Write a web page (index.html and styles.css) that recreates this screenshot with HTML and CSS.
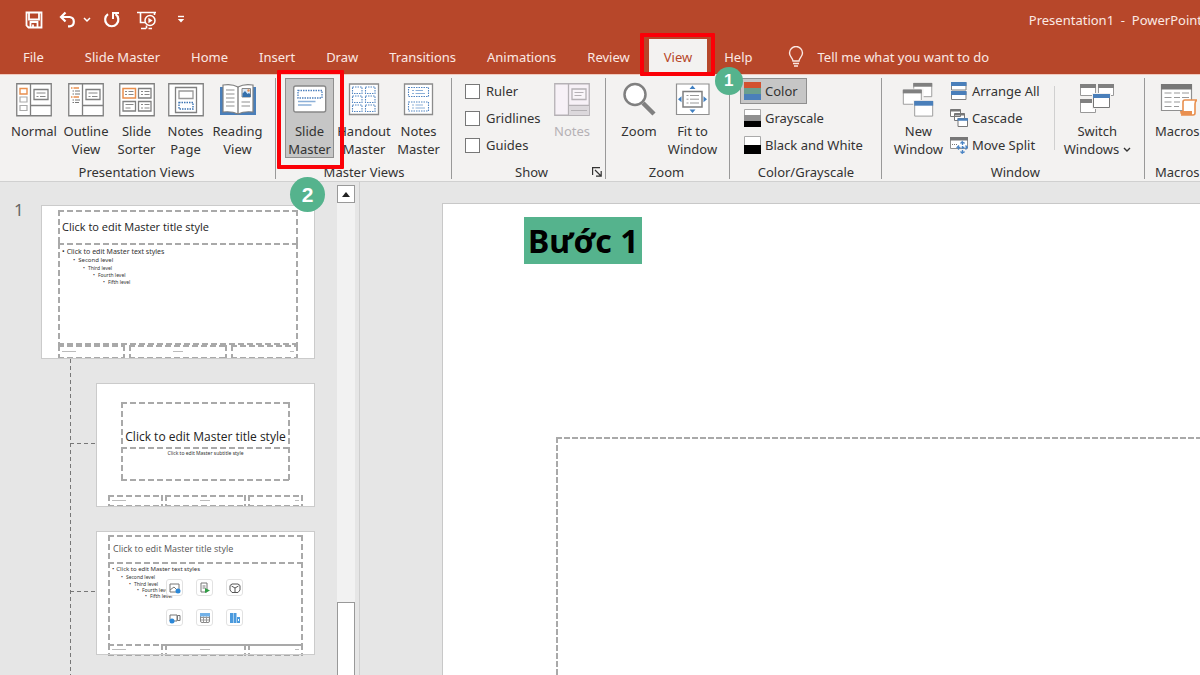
FILE: index.html
```html
<!DOCTYPE html>
<html lang="en">
<head>
<meta charset="utf-8">
<title>Presentation1 - PowerPoint</title>
<link rel="stylesheet" href="styles.css">
</head>
<body>
<header class="titlebar">
  <div class="quick">
    <button class="qa qa-save" aria-label="Save"><svg width="18" height="18" viewBox="0 0 18 18"><path d="M1.500 1.500h15v15H3.500l-2-2zM4 2v6.500h10V2M5.500 16v-5h7v5M8 13.500v3" fill="none" stroke="#fff" stroke-width="1.800"/></svg></button>
    <button class="qa qa-undo" aria-label="Undo"><svg width="18" height="18" viewBox="0 0 18 18"><path d="M6.500 1.500L2 6l4.500 4.500M2.500 6h8.300a4.700 4.700 0 0 1 0 9.300H9" fill="none" stroke="#fff" stroke-width="2.200"/></svg></button>
    <button class="qa qa-menu" aria-label="Undo history"><svg width="8" height="6" viewBox="0 0 8 6"><path d="M1 1l3 3 3-3" fill="none" stroke="#fff" stroke-width="1.500"/></svg></button>
    <button class="qa qa-redo" aria-label="Redo"><svg width="18" height="18" viewBox="0 0 18 18"><path d="M5 3.200A6.600 6.600 0 1 0 12.500 3.200" fill="none" stroke="#fff" stroke-width="2.200"/><path d="M10 8V2h6" fill="none" stroke="#fff" stroke-width="2"/></svg></button>
    <button class="qa qa-show" aria-label="Start from beginning"><svg width="20" height="20" viewBox="0 0 20 20"><path d="M0 2.500h19M3.500 3v9.500h5M17.500 3v2M4 18.500h5M11.500 18.500H15M9.500 15.500v3" fill="none" stroke="#fff" stroke-width="1.600"/><circle cx="13" cy="10.500" r="5" fill="none" stroke="#fff" stroke-width="1.500"/><path d="M11.400 7.800v5.400l4.200-2.700z" fill="#fff"/></svg></button>
    <button class="qa qa-more" aria-label="Customize Quick Access Toolbar"><svg width="8" height="9" viewBox="0 0 8 9"><path d="M1 1.500h6" stroke="#fff" stroke-width="1.400"/><path d="M.8 4h6.400L4 7.500z" fill="#fff"/></svg></button>
    <span class="doc">Presentation1&nbsp; -&nbsp; PowerPoint</span>
  </div>
  <nav class="tabs">
    <button class="tab tab-file">File</button>
    <button class="tab">Slide Master</button>
    <button class="tab">Home</button>
    <button class="tab">Insert</button>
    <button class="tab">Draw</button>
    <button class="tab">Transitions</button>
    <button class="tab">Animations</button>
    <button class="tab">Review</button>
    <div class="marked marked-tab"><button class="tab tab-on">View</button><span class="frame frame-tab"></span><span class="step step-1">1</span></div>
    <button class="tab">Help</button>
    <button class="tell"><svg width="16" height="22" viewBox="0 0 16 22"><path d="M5 15c0-3-3.500-4-3.500-8a6.300 6.300 0 0 1 13 0c0 4-3.500 5-3.500 8zM5 17.500h6M6 20h4" fill="none" stroke="#fbe9e4" stroke-width="1.400"/></svg>Tell me what you want to do</button>
  </nav>
</header>

<section class="ribbon" aria-label="View">
  <div class="group g-views">
    <div class="tools">
      <button class="big w52"><svg width="36" height="36" viewBox="0 0 36 36"><path d="M.75 1.750h34.500v32H.75z" fill="#fff" stroke="#808080" stroke-width="1.300"/><path d="M14.500 2v32M15 23.500h20" stroke="#808080" stroke-width="1.300"/><path d="M18 7.500h14v10H18z" fill="#fff" stroke="#808080" stroke-width="1.300"/><path d="M20.500 11h9M20.500 14.500h2M24 14.500h5.500" stroke="#888"/><path d="M4 6.500h7V12H4z" fill="#fff" stroke="#e98f4e" stroke-width="1.400"/><path d="M4 15h7v5H4zM4 23.500h7v5H4z" fill="#fff" stroke="#aaa" stroke-width="1.200"/></svg><span>Normal</span></button>
      <button class="big w52"><svg width="36" height="36" viewBox="0 0 36 36"><path d="M.75 1.750h34.500v32H.75z" fill="#fff" stroke="#808080" stroke-width="1.300"/><path d="M14.500 2v32M15 23.500h20" stroke="#808080" stroke-width="1.300"/><path d="M18 7.500h14v10H18z" fill="#fff" stroke="#808080" stroke-width="1.300"/><path d="M20.500 11h9M20.500 14.500h2M24 14.500h5.500" stroke="#888"/><path d="M3 6h1.500M5.500 6H11M3 15h1.500M5.500 15H11" stroke="#e98f4e" stroke-width="1.400"/><path d="M4.500 9H6M7 9h5M4.500 12H6M7 12h5M4.500 18H6M7 18h5M4.500 20.500H6M7 20.500h4" stroke="#777" stroke-width="1"/></svg><span>Outline<br>View</span></button>
      <button class="big w48"><svg width="36" height="36" viewBox="0 0 36 36"><path d="M.75 1.750h34.500v32H.75z" fill="#fff" stroke="#808080" stroke-width="1.300"/><path d="M4 6.500h12.500v9.500H4z" fill="none" stroke="#e98f4e" stroke-width="1.500"/><path d="M19.500 6.500H32v9.500H19.500zM4 19.500h12.500V29H4zM19.500 19.500H32V29H19.500z" fill="none" stroke="#808080" stroke-width="1.300"/><path d="M6 9.500h2M9.500 9.500h5M6 12.500h2M9.500 12.500h5M22 9.500h2M25.500 9.500h5M22 12.500h2M25.500 12.500h5M6.500 22.500h8M6.500 26h5M22 22.500h2M25.500 22.500h5M22 26h2M25.500 26h5" stroke="#888"/></svg><span>Slide<br>Sorter</span></button>
      <button class="big w48"><svg width="36" height="36" viewBox="0 0 36 36"><path d="M.75 1.750h34.500v32H.75z" fill="#fff" stroke="#808080" stroke-width="1.300"/><path d="M7.500 5.500h21v25h-21z" fill="#fff" stroke="#808080" stroke-width="1.300"/><path d="M11 9h14v7.500H11z" fill="#fff" stroke="#999" stroke-width="1.300"/><path d="M11 20.500h14V27H11z" fill="#fff" stroke="#3f76b4" stroke-width="1.400" stroke-dasharray="1.500 1"/></svg><span>Notes<br>Page</span></button>
      <button class="big w56"><svg width="38" height="36" viewBox="0 0 38 36"><path d="M1 5h36v28H1z" fill="#4a7fba"/><path d="M4 3q9-1.500 15 2 6-3.500 15-2v27q-9-1-15 2-6-3-15-2z" fill="#fff" stroke="#808080" stroke-width="1.200"/><path d="M19 5v27" stroke="#777" stroke-width="1.300"/><path d="M7 8h8.500M7 12h8.500M7 16h8.500M7 20h8.500M7 24h8.500M22.500 20H31M22.500 24H31" stroke="#909090" stroke-width="1.200"/><path d="M23 6.500h8.500V15H23z" fill="#d8e5f3" stroke="#888"/><path d="M23.500 15v-3.500l2.500-2.500 2.500 3 1.500-1 1.500 1.500V15z" fill="#346fab"/><circle cx="29.500" cy="8.500" r="1.200" fill="#e98f4e"/></svg><span>Reading<br>View</span></button>
    </div>
    <h2 class="caption">Presentation Views</h2>
  </div>
  <div class="group g-masters">
    <div class="tools">
      <div class="marked"><button class="big w48 pressed"><svg width="36" height="36" viewBox="0 0 36 36"><rect x="1.700" y="4" width="32" height="26" rx="2" fill="#fff" stroke="#888" stroke-width="1.400"/><path d="M6 8.500h24V16H6z" fill="none" stroke="#4f81bd" stroke-width="1.300" stroke-dasharray="1.500 1"/><path d="M6 19.500h17.500M6 23h13.500" stroke="#8cb0d8" stroke-width="1.300"/></svg><span>Slide<br>Master</span></button><span class="frame frame-button"></span><span class="step step-2">2</span></div>
      <button class="big w60"><svg width="36" height="36" viewBox="0 0 36 36"><path d="M3.500 2h29v30.500h-29z" fill="#fff" stroke="#8c8c8c" stroke-width="1.300"/><g fill="none" stroke="#5286c2" stroke-width="1.100" stroke-dasharray="1.500 1"><path d="M6.500 5h9.500v6.500H6.500zM19.500 5H29v6.500h-9.500zM6.500 14H16v6.500H6.500zM19.500 14H29v6.500h-9.500zM6.500 23H16v6.500H6.500zM19.500 23H29v6.500h-9.500z"/></g></svg><span>Handout<br>Master</span></button>
      <button class="big w48"><svg width="36" height="36" viewBox="0 0 36 36"><path d="M3.500 2h28v30.500h-28z" fill="#fff" stroke="#8c8c8c" stroke-width="1.300"/><g fill="none" stroke="#5286c2" stroke-width="1.100" stroke-dasharray="1.500 1"><path d="M7.500 5.500h20v9h-20zM7.500 20h20v9h-20z"/></g><path d="M11 8.500h2M14.500 8.500H22M11 11.500h2M14.500 11.500H24M11 23h2M14.500 23H22M11 26h2M14.500 26H24" stroke="#8cb0d8"/></svg><span>Notes<br>Master</span></button>
    </div>
    <h2 class="caption">Master Views</h2>
  </div>
  <div class="group g-show">
    <div class="tools">
      <div class="stack checks">
        <label><input type="checkbox">Ruler</label>
        <label><input type="checkbox">Gridlines</label>
        <label><input type="checkbox">Guides</label>
      </div>
      <button class="big w52 off" disabled><svg width="36" height="36" viewBox="0 0 36 36"><path d="M.75 1.750h34.500v31.500H.75z" fill="#f7f1f7" stroke="#b5b1b5" stroke-width="1.300"/><path d="M14.500 2v31M15 23.500h20" stroke="#b5b1b5" stroke-width="1.300"/><path d="M15 24h20v9H15z" fill="#dcd8dc"/><path d="M18 7h14v10.500H18z" fill="#f9f5f9" stroke="#b5b1b5" stroke-width="1.300"/><path d="M20.500 10.500h9M20.500 13.500h7M17 28.500h16" stroke="#b5b1b5"/></svg><span>Notes</span></button>
    </div>
    <h2 class="caption">Show</h2>
    <button class="launcher" aria-label="Grid Settings"><svg width="10" height="10" viewBox="0 0 10 10"><path d="M.6 8V.6H8M3 3l5.500 5.500M9.200 4v5.200H4" fill="none" stroke="#333" stroke-width="1.200"/></svg></button>
  </div>
  <div class="group g-zoom">
    <div class="tools">
      <button class="big w52"><svg width="36" height="36" viewBox="0 0 36 36"><path d="M22 21l11 11" stroke="#808080" stroke-width="4.500"/><circle cx="14" cy="12.500" r="10.500" fill="#fff" stroke="#808080" stroke-width="2.500"/></svg><span>Zoom</span></button>
      <button class="big w56"><svg width="36" height="36" viewBox="0 0 36 36"><path d="M1.500 2h32.500v30.500H1.500z" fill="#fff" stroke="#909090" stroke-width="1.200"/><path d="M8 9.500h19v15.500H8z" fill="#fff" stroke="#808080" stroke-width="1.500"/><path d="M11.500 13.500h2M15 13.500h9M11.500 17.200h2M15 17.200h9M11.500 21h2M15 21h9" stroke="#999"/><path d="M14.500 7l3-3.500 3 3.500zM14.500 27.500l3 3.500 3-3.500zM6.500 14.200L3 17.200l3.500 3zM28.500 14.200l3.500 3-3.500 3z" fill="#3f7fc1"/></svg><span>Fit to<br>Window</span></button>
    </div>
    <h2 class="caption">Zoom</h2>
  </div>
  <div class="group g-color">
    <div class="tools">
      <div class="stack">
        <button class="small pressed"><svg width="17" height="18" viewBox="0 0 17 18"><path d="M0 0h17v6H0z" fill="#d35230"/><path d="M0 6h17v6H0z" fill="#6a9f8e"/><path d="M0 12h17v6H0z" fill="#4a7fba"/></svg>Color</button>
        <button class="small"><svg width="17" height="18" viewBox="0 0 17 18"><path d="M.5.5h16v17H.5z" fill="#fff" stroke="#aaa"/><path d="M0 6h17v6H0z" fill="#909090"/><path d="M0 12h17v6H0z" fill="#000"/></svg>Grayscale</button>
        <button class="small"><svg width="17" height="18" viewBox="0 0 17 18"><path d="M.5.5h16v17H.5z" fill="#fff" stroke="#aaa"/><path d="M0 9h17v9H0z" fill="#000"/></svg>Black and White</button>
      </div>
    </div>
    <h2 class="caption">Color/Grayscale</h2>
  </div>
  <div class="group g-window">
    <div class="tools">
      <button class="big w56"><svg width="36" height="38" viewBox="0 0 36 38"><g fill="#fff" stroke="#999"><path d="M13.500 1.500h19v14h-19z"/></g><path d="M13 1h20v4H13z" fill="#808080"/><path d="M1 7h23v18H1z" fill="#f3f2f1"/><path d="M2.500 8.500h19v15h-19z" fill="#fff" stroke="#999"/><path d="M2 8h20v4H2z" fill="#808080"/><path d="M13 19h22v18H13z" fill="#f3f2f1"/><path d="M14.500 20.500h19v15.500h-19z" fill="#fff" stroke="#999"/><path d="M14 20h20v5H14z" fill="#4a7fba"/></svg><span>New<br>Window</span></button>
      <div class="stack">
        <button class="small"><svg width="18" height="18" viewBox="0 0 18 18"><path d="M1.500.5h14.500v7.500H1.500zM1.500 9.500h14.500v8H1.500z" fill="#fff" stroke="#808080"/><path d="M1 0h15.500v4H1zM1 9h15.500v4H1z" fill="#4a7fba"/></svg>Arrange All</button>
        <button class="small"><svg width="18" height="18" viewBox="0 0 18 18"><path d="M.5.500h10v7H.5zM4.500 4.500h10v7h-10z" fill="#fff" stroke="#777"/><path d="M.5 1.500h10M4.500 5.500h10" stroke="#777" stroke-width="2"/><path d="M8 9.500h9.500v8H8z" fill="#fff" stroke="#777"/><path d="M7.500 10.500h10.500" stroke="#4a7fba" stroke-width="2.500"/></svg>Cascade</button>
        <button class="small"><svg width="18" height="18" viewBox="0 0 18 18"><path d="M.5 1.500h17v11H.5z" fill="#fff" stroke="#909090"/><path d="M0 1h18v3.500H0z" fill="#777"/><path d="M2 8.500h6" stroke="#777" stroke-dasharray="1 1"/><path d="M12.500 6v11M7.500 11.500h10M10.500 7.500l2-2 2 2M10.500 15.500l2 2 2-2M9 9.500l-2 2 2 2M15.500 9.500l2 2-2 2" fill="none" stroke="#4a84c4" stroke-width="1.300" stroke-dasharray="3 1"/></svg>Move Split</button>
      </div>
      <button class="big w-switch"><svg width="36" height="36" viewBox="0 0 36 36"><g fill="#fff" stroke="#999"><path d="M1.500 2.500h15v11h-15zM19.500 2.500h15v11h-15zM1.500 17.500h15v13h-15z"/></g><path d="M1 2h16v4H1zM19 2h16v4H19zM1 17h16v4H1z" fill="#808080"/><path d="M13 11h19v16H13z" fill="#f3f2f1"/><path d="M14.500 12.500h16v13h-16z" fill="#fff" stroke="#777"/><path d="M14 12h17v4H14z" fill="#4a7fba"/></svg><span>Switch<br>Windows <svg class="chev" width="8" height="6" viewBox="0 0 8 6"><path d="M1 1l3 3 3-3" fill="none" stroke="#333" stroke-width="1.400"/></svg></span></button>
    </div>
    <h2 class="caption">Window</h2>
  </div>
  <div class="group g-macros">
    <div class="tools">
      <button class="big w56"><svg width="40" height="36" viewBox="0 0 40 36"><path d="M4.500 2.500h30v26h-30z" fill="#fff" stroke="#909090" stroke-width="1.200"/><path d="M4 2h31v5.500H4z" fill="#777"/><path d="M7.500 11h7M17 11h6M25 11h7M7.500 15.500h7M17 15.500h6M25 15.500h7M7.500 20h7M17 20h6M7.500 24.500h7M17 24.500h5" stroke="#999" stroke-width="1.200"/><path d="M26 30V20q0-2 2-2h12q-2 1-2 4v9q0 2-2 2H24" fill="#fff" stroke="#e98f4e" stroke-width="1.600"/><path d="M23 29h12v4H25q-2-1-2-4z" fill="#e98f4e"/></svg><span>Macros</span></button>
    </div>
    <h2 class="caption">Macros</h2>
  </div>
</section>

<main class="work">
  <aside class="pane">
    <div class="number">1</div>
    <div class="thumbs">
      <article class="thumb master">
        <div class="ph title">Click to edit Master title style</div>
        <ul class="ph levels"><li>Click to edit Master text styles</li><li>Second level</li><li>Third level</li><li>Fourth level</li><li>Fifth level</li></ul>
        <div class="foot"><span class="ph"><i></i></span><span class="ph"><i></i></span><span class="ph"><i></i></span></div>
      </article>
      <div class="layouts">
        <div class="branch"><article class="thumb cover">
          <div class="ph title">Click to edit Master title style</div>
          <div class="ph subtitle">Click to edit Master subtitle style</div>
          <div class="foot"><span class="ph"><i></i></span><span class="ph"><i></i></span><span class="ph"><i></i></span></div>
        </article></div>
        <div class="branch"><article class="thumb content">
          <div class="ph title">Click to edit Master title style</div>
          <div class="ph body"><ul class="levels"><li>Click to edit Master text styles</li><li>Second level</li><li>Third level</li><li>Fourth level</li><li>Fifth level</li></ul>
            <div class="inserts">
              <span><svg width="12" height="12" viewBox="0 0 12 12"><path d="M1 2h9v8H1zM1 8l4-3 4 4" fill="none" stroke="#777"/><circle cx="9" cy="9" r="2.500" fill="#2b88d8"/></svg></span>
              <span><svg width="12" height="12" viewBox="0 0 12 12"><path d="M2 1h6v9H2zM3.500 4h3M3.500 6h3" fill="none" stroke="#777"/><path d="M6 6l5 2.500L6 11z" fill="#2f9e44"/></svg></span>
              <span><svg width="12" height="12" viewBox="0 0 12 12"><path d="M1 3.500l2-1.500h6l2 1.500V8L9 10.500H3L1 8zM2.500 4L6 6l3.500-2M6 6v4" fill="none" stroke="#555"/></svg></span>
              <span><svg width="12" height="12" viewBox="0 0 12 12"><path d="M1 3h7v6H1zM8.500 3.500H11v5H8.500z" fill="none" stroke="#777"/><circle cx="3" cy="9" r="2.500" fill="#2b88d8"/></svg></span>
              <span><svg width="12" height="12" viewBox="0 0 12 12"><rect x="1.500" y="1.500" width="9" height="9" rx="1.500" fill="#fff" stroke="#888"/><path d="M1 1h10v3.500H1z" fill="#73b2e8"/><path d="M2 5.500h8M2 8h8M4.500 4.500v6M7.500 4.500v6" stroke="#999"/></svg></span>
              <span><svg width="12" height="12" viewBox="0 0 12 12"><path d="M1 1h3v10H1zM4.500 1h3v10h-3zM8 5h3v6H8z" fill="#4b9add"/><path d="M9 7h1v2H9z" fill="#fff"/></svg></span>
            </div>
          </div>
          <div class="foot"><span class="ph"><i></i></span><span class="ph"><i></i></span><span class="ph"><i></i></span></div>
        </article></div>
      </div>
    </div>
    <div class="scroll"><button class="up" aria-label="Scroll up"><svg width="8" height="5" viewBox="0 0 8 5"><path d="M0 5l4-5 4 5z" fill="#222"/></svg></button><span class="grip"></span></div>
  </aside>
  <section class="canvas">
    <div class="slide">
      <strong class="note">Bước 1</strong>
      <div class="area"></div>
    </div>
  </section>
</main>
</body>
</html>
```
FILE: styles.css
```css
* { box-sizing: border-box; }
body {
  margin: 0;
  height: 100vh;
  display: flex;
  flex-direction: column;
  overflow: hidden;
  background: #e6e6e6;
  color: #333;
  font: 13px/18px "Noto Sans", "Open Sans", sans-serif;
}
button { margin: 0; padding: 0; border: 0; background: none; color: inherit; font: inherit; }
svg { display: block; flex: none; }

/* title bar */
.titlebar { background: #b7472a; color: #fbe9e4; }
.quick { display: flex; align-items: center; height: 39px; padding-left: 25px; white-space: nowrap; }
.qa-undo { margin-left: 16px; }
.qa-menu { margin-left: 6px; }
.qa-redo { margin-left: 12px; }
.qa-show { margin-left: 16px; }
.qa-more { margin-left: 20px; }
.doc { margin-left: auto; margin-right: -2px; }
.tabs { display: flex; height: 35px; padding-left: 9px; gap: 3px; white-space: nowrap; }
.tab { height: 35px; padding: 1px 14px 0; }
.tab-file { margin-right: 10px; }
.tab-on { padding: 1px 15px 0; background: #f3f2f1; color: #b7472a; }
.tell { display: flex; align-items: center; gap: 14px; margin-left: 18px; }
.marked { position: relative; z-index: 2; }
.marked-tab { margin-left: 2px; }

/* step markers */
.frame { position: absolute; border: 4px solid #fb0007; border-radius: 1px; pointer-events: none; }
.frame-tab { inset: -6px -8px -2px -9px; }
.frame-button { inset: -8px -10px -11px -8px; }
.step {
  position: absolute;
  display: grid;
  place-items: center;
  border-radius: 50%;
  background: #55b38d;
  color: #fff;
  font-family: "Liberation Sans", sans-serif;
  font-weight: bold;
}
.step-1 { left: 66px; top: 28px; width: 28px; height: 28px; font-size: 17px; }
.step-2 { left: 5px; top: 99px; width: 35px; height: 35px; font-size: 21px; }

/* ribbon */
.ribbon {
  display: flex;
  padding: 3px 0 2px;
  border-top: 1px solid #f1c9bd;
  border-bottom: 1px solid #d0d0d0;
  background: #f3f2f1;
  white-space: nowrap;
}
.group { position: relative; flex: none; border-right: 1px solid #999; }
.tools { display: flex; height: 80px; }
.caption { margin: 7px 0 0; font-size: 13px; line-height: 14px; font-weight: normal; text-align: center; }
.g-views { padding: 0 10px 0 8px; }
.g-masters { padding: 0 8px 0 9px; }
.g-show { padding: 0 7px 0 13px; }
.g-zoom { padding: 0 9px 0 7px; }
.g-color { padding: 0 9px 0 10px; }
.g-window { padding: 0 4px 0 9px; }
.g-macros { padding: 0 8px 0 5px; border-right: 0; }
.big { display: flex; flex-direction: column; align-items: center; gap: 4px; height: 80px; padding-top: 4px; text-align: center; }
.big > svg { height: 36px; }
.w48 { width: 49px; }
.w52 { width: 52px; }
.w56 { width: 55px; }
.w60 { width: 60px; }
.w-switch { width: 85px; }
.pressed { background: #c6c6c6; outline: 1px solid #8f8f8f; outline-offset: -1px; }
.off { color: #b5b1b5; }
.chev { display: inline; vertical-align: 1px; }
.stack { display: flex; flex-direction: column; align-items: flex-start; gap: 1px; }
.small { display: flex; align-items: center; gap: 4px; height: 26px; padding: 0 9px 0 4px; }
.g-window .stack {
  padding-right: 6px;
  background: linear-gradient(#d0d0d0, #d0d0d0) 100% 50% / 1px 64px no-repeat;
}
.checks { width: 81px; }
.checks label { display: flex; align-items: center; gap: 6px; height: 26px; }
.checks input { appearance: none; flex: none; width: 15px; height: 15px; margin: 0; border: 1px solid #777; background: #fff; }
.launcher { position: absolute; right: 3px; bottom: 2px; }

/* thumbnail pane */
.work { flex: 1; display: flex; min-height: 0; overflow: hidden; }
.pane { flex: none; display: flex; width: 360px; padding-top: 3px; border-right: 1px solid #cfcfcf; overflow: hidden; }
.number { width: 41px; padding: 14px 0 0 14px; font-size: 17px; line-height: 22px; color: #666; }
.thumbs { display: flex; flex-direction: column; width: 274px; padding-top: 20px; }
.thumb { background: #fff; outline: 1px solid #cbcbcb; outline-offset: -1px; }
.ph {
  --line: #a9a9a9;
  --on: 6px;
  --step: 9px;
  margin: 0;
  background:
    repeating-linear-gradient(90deg, var(--line) 0 var(--on), transparent 0 var(--step)) 0 0 / 100% 2px no-repeat,
    repeating-linear-gradient(90deg, var(--line) 0 var(--on), transparent 0 var(--step)) 0 100% / 100% 2px no-repeat,
    repeating-linear-gradient(var(--line) 0 var(--on), transparent 0 var(--step)) 0 0 / 2px 100% no-repeat,
    repeating-linear-gradient(var(--line) 0 var(--on), transparent 0 var(--step)) 100% 0 / 2px 100% no-repeat;
}
.master { height: 154px; padding: 5px 17px 0; }
.thumb .title { color: #222; white-space: nowrap; font-family: "Open Sans", sans-serif; }
.master .title { height: 35px; padding: 8px 4px; font-size: 11px; line-height: 18px; }
.levels { list-style: none; margin: 0; padding: 0; font-size: 7px; line-height: 9px; color: #333; white-space: nowrap; }
.levels li::before { content: "•"; margin-right: 2px; }
.levels li:nth-child(n+3) { font-size: 5px; line-height: 7px; }
.levels li:nth-child(2) { padding-left: 11px; font-size: 6px; }
.levels li:nth-child(3) { padding-left: 21px; }
.levels li:nth-child(4) { padding-left: 31px; }
.levels li:nth-child(5) { padding-left: 41px; }
.levels li:nth-child(n+2)::before { margin-right: 3px; }
.master .levels { height: 102px; margin-top: -2px; padding: 4px; }
.foot { display: grid; grid-template-columns: 67fr 99fr 67fr; gap: 4px; }
.foot .ph { height: 14px; padding: 6px 4px; }
.foot i { display: block; width: 14px; height: 1px; background: #bbb; }
.foot .ph:nth-child(2) i { width: 10px; margin: auto; }
.foot .ph:nth-child(3) i { width: 4px; margin-left: auto; }
.layouts {
  flex: 1;
  margin-left: 29px;
  padding-left: 26px;
  background: repeating-linear-gradient(#777 0 4px, transparent 0 7px) 0 0 / 1px 100% no-repeat;
}
.branch { position: relative; padding-top: 24px; }
.branch::before {
  content: "";
  position: absolute;
  left: -26px;
  top: 84px;
  width: 25px;
  height: 1px;
  background: repeating-linear-gradient(90deg, #777 0 4px, transparent 0 7px);
}
.layouts .thumb { height: 124px; padding: 0 12px; }
.layouts .foot { gap: 2px; }
.layouts .foot .ph { height: 12px; padding-top: 5px; }
.layouts .cover { padding-top: 19px; }
.cover .title { height: 47px; margin: 0 13px; padding-top: 26px; font-size: 12px; line-height: 18px; text-align: center; }
.cover .subtitle { height: 34px; margin: -2px 13px 14px; padding-top: 3px; font-size: 5px; line-height: 6px; text-align: center; }
.layouts .content { padding-top: 4px; }
.content .title { height: 29px; padding: 5px; font-size: 9px; line-height: 18px; color: #555; }
.content .body { display: grid; height: 84px; margin-top: -2px; padding: 3px 4px; }
.content .levels, .inserts { grid-area: 1 / 1; }
.content .levels { font-size: 6px; line-height: 8px; }
.content .levels li:nth-child(n+2) { font-size: 5px; line-height: 6px; }
.content .levels li:nth-child(2) { padding-left: 9px; line-height: 8px; }
.content .levels li:nth-child(3) { padding-left: 17px; }
.content .levels li:nth-child(4) { padding-left: 25px; }
.content .levels li:nth-child(5) { padding-left: 33px; }
.inserts { display: grid; grid-template-columns: repeat(3, 17px); grid-auto-rows: 17px; gap: 13px; padding: 14px 0 0 54px; }
.inserts span { display: grid; place-items: center; border: 1px solid #e2e2e2; border-radius: 3px; background: #fff; }
.content .foot { margin-top: -2px; }

/* pane scrollbar */
.scroll { display: flex; flex-direction: column; justify-content: space-between; width: 18px; margin-left: 22px; background: #f2f2f2; }
.up { display: grid; place-items: center; height: 18px; border: 1px solid #999; background: #fff; }
.grip { height: 15%; border: 1px solid #999; border-bottom: 0; background: #fff; }

/* editing area */
.canvas { flex: 1; min-width: 0; padding: 21px 0 0 82px; }
.slide { display: flex; flex-direction: column; align-items: flex-start; height: 100%; padding: 13px 0 0 81px; border: 1px solid #c8c8c8; border-width: 1px 0 0 1px; background: #fff; }
.note { padding: 0 4px; background: #55b38d; color: #000; font-size: 32px; line-height: 47px; }
.area {
  flex: 1;
  align-self: stretch;
  margin: 173px 0 0 32px;
  background:
    repeating-linear-gradient(90deg, #a9a9a9 0 6px, transparent 0 8px) 0 0 / 100% 2px no-repeat,
    repeating-linear-gradient(#a9a9a9 0 6px, transparent 0 8px) 0 0 / 2px 100% no-repeat;
}
```
